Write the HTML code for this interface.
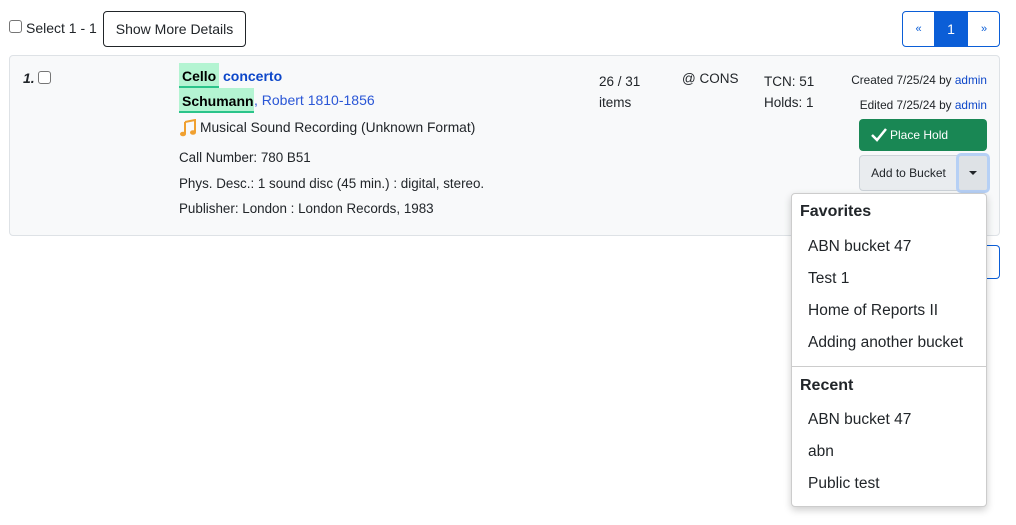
<!DOCTYPE html>
<html><head><meta charset="utf-8"><style>
*{box-sizing:border-box;margin:0;padding:0}
body{width:1016px;height:525px;background:#fff;font-family:"Liberation Sans",sans-serif;color:#212529;position:relative;overflow:hidden}
.a{position:absolute;white-space:nowrap}
.cb{position:absolute;width:13px;height:13px;border:1px solid #767676;border-radius:3px;background:#fff}
.blue{color:#0d47c9}
.mi{position:absolute;left:808px;font-size:15.5px;color:#212529}
</style></head><body>
<div class="cb" style="left:9px;top:20px"></div>
<div class="a" style="left:26px;top:20px;font-size:14px">Select 1 - 1</div>
<div class="a" style="left:103px;top:11px;width:143px;height:36px;border:1px solid #212529;border-radius:4px;font-size:14px;line-height:34px;text-align:center">Show More Details</div>

<div class="a" style="left:902px;top:11px;width:98px;height:36px;border:1px solid #0b5ed7;border-radius:4px;overflow:hidden">
 <div class="a" style="left:0;top:0;width:31px;height:34px;line-height:34px;text-align:center;color:#0b5ed7;font-size:11px">«</div>
 <div class="a" style="left:31px;top:0;width:34px;height:34px;line-height:34px;text-align:center;background:#0b5ed7;color:#fff;font-size:14px">1</div>
 <div class="a" style="left:65px;top:0;width:32px;height:34px;line-height:34px;text-align:center;color:#0b5ed7;font-size:11px">»</div>
</div>

<div class="a" style="left:986px;top:245px;width:14px;height:34px;border:1px solid #0b5ed7;border-left:none;border-radius:0 4px 4px 0"></div>

<div class="a" style="left:9px;top:55px;width:991px;height:181px;background:#f8f9fa;border:1px solid #dee2e6;border-radius:4px"></div>
<div class="a" style="left:23px;top:70px;font-size:14px;font-weight:bold;font-style:italic">1.</div>
<div class="cb" style="left:38px;top:71px"></div>

<div class="a" style="left:179px;top:63px;width:40px;height:25px;background:#b4f4d2;border-bottom:2px solid #2bc48a"></div>
<div class="a" style="left:182px;top:68px;font-size:14px;font-weight:bold;color:#000">Cello</div>
<div class="a blue" style="left:223px;top:68px;font-size:14px;font-weight:bold">concerto</div>
<div class="a" style="left:179px;top:88px;width:75px;height:25px;background:#b4f4d2;border-bottom:2px solid #2bc48a"></div>
<div class="a" style="left:182px;top:93px;font-size:14px;font-weight:bold;color:#000">Schumann</div>
<div class="a" style="left:254px;top:92px;font-size:14px;color:#2a56d6">, Robert 1810-1856</div>
<svg class="a" style="left:179px;top:119px" width="18" height="18" viewBox="0 0 18 18"><path d="M6 3 L16 1 L16 13" fill="none" stroke="#f0a030" stroke-width="2"/><path d="M6 3 V15" stroke="#f0a030" stroke-width="2"/><ellipse cx="4" cy="15" rx="3" ry="2.3" fill="#f0a030"/><ellipse cx="14" cy="13.5" rx="3" ry="2.3" fill="#f0a030"/></svg>
<div class="a" style="left:200px;top:120px;font-size:13.8px">Musical Sound Recording (Unknown Format)</div>
<div class="a" style="left:179px;top:150px;font-size:13.4px">Call Number: 780 B51</div>
<div class="a" style="left:179px;top:176px;font-size:13.4px">Phys. Desc.: 1 sound disc (45 min.) : digital, stereo.</div>
<div class="a" style="left:179px;top:201px;font-size:13.4px">Publisher: London : London Records, 1983</div>

<div class="a" style="left:599px;top:71px;font-size:13.5px;line-height:21px">26 / 31<br>items</div>
<div class="a" style="left:682px;top:71px;font-size:13.5px">@ CONS</div>
<div class="a" style="left:764px;top:71px;font-size:13.5px;line-height:21px">TCN: 51<br>Holds: 1</div>
<div class="a" style="right:29px;top:68px;font-size:11.8px;text-align:right;line-height:25px">Created 7/25/24 by <span class="blue">admin</span><br>Edited 7/25/24 by <span class="blue">admin</span></div>

<div class="a" style="left:859px;top:119px;width:128px;height:32px;background:#198754;border-radius:4px;color:#fff;font-size:12px;line-height:32px;padding-left:31px">Place Hold</div>
<svg class="a" style="left:870px;top:127px" width="18" height="16" viewBox="0 0 18 16"><path d="M2 8 L7 13 L16 2" fill="none" stroke="#fff" stroke-width="2.5"/></svg>
<div class="a" style="left:859px;top:155px;width:99px;height:36px;background:#e9ecef;border:1px solid #ced4da;border-radius:4px 0 0 4px;font-size:12px;line-height:34px;text-align:center">Add to Bucket</div>
<div class="a" style="left:956px;top:153px;width:34px;height:40px;border:3px solid #b6d0f5;border-radius:5px;background:#dee2e6"></div>
<div class="a" style="left:969px;top:171px;width:0;height:0;border-left:4px solid transparent;border-right:4px solid transparent;border-top:4px solid #212529"></div>

<div class="a" style="left:791px;top:193px;width:196px;height:314px;background:#fff;border:1px solid #ccc;border-radius:4px;box-shadow:0 3px 8px rgba(0,0,0,.2)"></div>
<div class="a" style="left:800px;top:203px;font-size:16px;font-weight:bold">Favorites</div>
<div class="mi" style="top:238px">ABN bucket 47</div>
<div class="mi" style="top:270px">Test 1</div>
<div class="mi" style="top:302px">Home of Reports II</div>
<div class="mi" style="top:334px">Adding another bucket</div>
<div class="a" style="left:792px;top:366px;width:194px;height:1px;background:#ccc"></div>
<div class="a" style="left:800px;top:377px;font-size:16px;font-weight:bold">Recent</div>
<div class="mi" style="top:411px">ABN bucket 47</div>
<div class="mi" style="top:443px">abn</div>
<div class="mi" style="top:475px">Public test</div>
</body></html>
